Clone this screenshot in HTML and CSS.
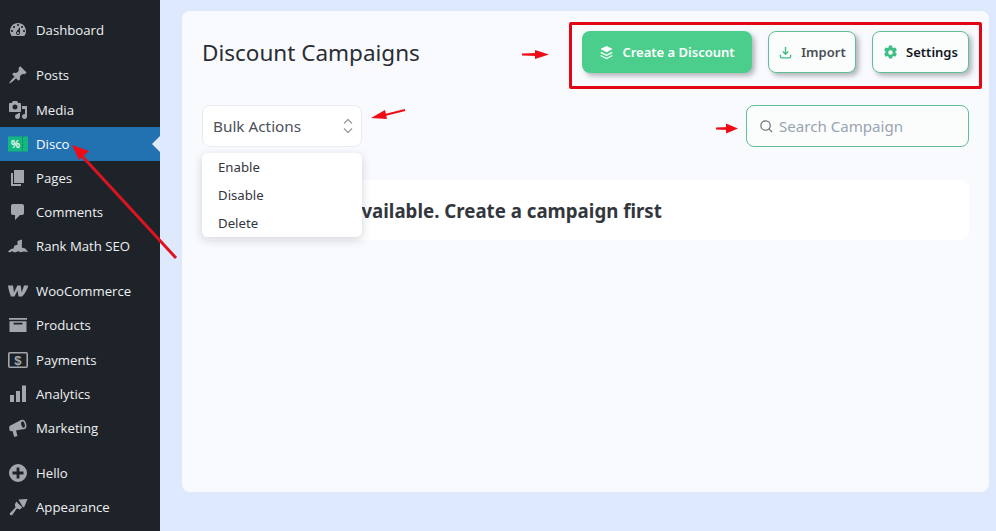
FILE: index.html
```html
<!DOCTYPE html>
<html lang="en">
<head>
<meta charset="utf-8">
<title>Discount Campaigns</title>
<link rel="stylesheet" href="styles.css">
</head>
<body>
<div class="app">
<nav class="side">
  <div class="group">
    <a class="item"><svg class="ic" viewBox="0 0 20 20"><path d="M3.76 16h12.48c1.1-1.37 1.76-3.11 1.76-5 0-4.42-3.58-8-8-8s-8 3.58-8 8c0 1.89.66 3.63 1.76 5zM10 4c.55 0 1 .45 1 1s-.45 1-1 1-1-.45-1-1 .45-1 1-1zM6 6c.55 0 1 .45 1 1s-.45 1-1 1-1-.45-1-1 .45-1 1-1zm8 0c.55 0 1 .45 1 1s-.45 1-1 1-1-.45-1-1 .45-1 1-1zm-5.37 5.55L12 7v6c0 1.1-.9 2-2 2s-2-.9-2-2c0-.57.24-1.08.63-1.45zM4 10c.55 0 1 .45 1 1s-.45 1-1 1-1-.45-1-1 .45-1 1-1zm12 0c.55 0 1 .45 1 1s-.45 1-1 1-1-.45-1-1 .45-1 1-1zm-5 3c0-.55-.45-1-1-1s-1 .45-1 1 .45 1 1 1 1-.45 1-1z"/></svg><span>Dashboard</span></a>
  </div>
  <div class="group">
    <a class="item"><svg class="ic" viewBox="0 0 20 20"><path d="M10.44 3.02l1.82-1.82 6.36 6.35-1.83 1.82c-1.05-.68-2.48-.57-3.41.36l-.75.75c-.92.93-1.04 2.35-.35 3.41l-1.83 1.82-2.41-2.41-2.8 2.79c-.42.42-3.38 2.71-3.8 2.29s1.86-3.39 2.28-3.81l2.79-2.79L4.1 9.36l1.83-1.82c1.05.69 2.48.57 3.4-.36l.75-.75c.93-.92 1.05-2.35.36-3.41z"/></svg><span>Posts</span></a>
    <a class="item"><svg class="ic" viewBox="0 0 20 20"><path d="M13 11V4c0-.55-.45-1-1-1h-1.67L9 1H5L3.67 3H2c-.55 0-1 .45-1 1v7c0 .55.45 1 1 1h10c.55 0 1-.45 1-1zM7 4.500c1.380 0 2.500 1.120 2.500 2.500S8.380 9.500 7 9.500 4.500 8.380 4.500 7 5.620 4.500 7 4.500zM14 6h5v10.500c0 1.380-1.120 2.500-2.500 2.500S14 17.880 14 16.500s1.120-2.500 2.500-2.500c.17 0 .34.020.5.050V9h-3V6zm-4 8.050V13h2v3.500c0 1.380-1.120 2.500-2.500 2.500S7 17.880 7 16.500 8.120 14 9.500 14c.17 0 .34.020.5.050z"/></svg><span>Media</span></a>
    <a class="item active"><svg class="ic" viewBox="0 0 20 20"><rect y="2.500" width="20" height="15" fill="#14b77f"/><path d="M14.500 2.500v15" stroke="#0b7f58" stroke-width="1" stroke-dasharray="1.500 1"/><text x="7.500" y="13.500" class="pct">%</text></svg><span>Disco</span></a>
    <a class="item"><svg class="ic" viewBox="0 0 20 20"><path d="M6 15V2h10v13H6zm-1 1h8v2H3V5h2v11z"/></svg><span>Pages</span></a>
    <a class="item"><svg class="ic" viewBox="0 0 20 20"><path d="M5 2h9c1.100 0 2 .9 2 2v7c0 1.100-.9 2-2 2h-2l-5 5v-5H5c-1.100 0-2-.9-2-2V4c0-1.100.9-2 2-2z"/></svg><span>Comments</span></a>
    <a class="item"><svg class="ic" viewBox="0 0 20 20"><path d="M0 15.500l3-2.500 2.500-.5 1-3 3-.8V5l4.500-1.500-.2 8 1.500.5 2 .5 2.700 3.500-4.500-.5-2.500.8-3-1-3 1.200-3-1.200-2.500 1.200z"/></svg><span>Rank Math SEO</span></a>
  </div>
  <div class="group">
    <a class="item"><svg class="ic" viewBox="0 0 20 20"><path d="M0 4.500h5l1 7 3.300-7h3.400l1 7 2.300-7h4.500C19 9 16.500 13 14 15.500h-3.500l-1-6-3 6H3C1.500 12 .5 8.500 0 4.500z"/></svg><span>WooCommerce</span></a>
    <a class="item"><svg class="ic" viewBox="0 0 20 20"><path fill-rule="evenodd" d="M1 3h18v1.800H1zM1.500 6.200h17V17h-17zM5.500 7.800v1.600h9V7.800z"/></svg><span>Products</span></a>
    <a class="item"><svg class="ic" viewBox="0 0 20 20"><rect x=".8" y="2.800" width="18.400" height="14.400" rx="1" class="outline"/><text x="10" y="14.500" class="dollar">$</text></svg><span>Payments</span></a>
    <a class="item"><svg class="ic" viewBox="0 0 20 20"><path d="M2 11h4v7H2zM8 7h4v11H8zM14 1.500h4V18h-4z"/></svg><span>Analytics</span></a>
    <a class="item"><svg class="ic" viewBox="0 0 20 20"><path d="M1.500 8L13 2l3 9-8 1.500 1.500 5.500-3.300 1-1.700-6-1.700.3C1.500 13 .8 10 1.500 8z"/><ellipse cx="15" cy="6.500" rx="3.200" ry="4.800" transform="rotate(-15 15 6.500)"/><ellipse cx="15" cy="6.500" rx="1.700" ry="3.200" transform="rotate(-15 15 6.500)" class="cut"/></svg><span>Marketing</span></a>
  </div>
  <div class="group">
    <a class="item"><svg class="ic" viewBox="0 0 20 20"><path fill-rule="evenodd" d="M10 1a9 9 0 1 0 0 18 9 9 0 0 0 0-18zM8.600 4.500h2.800v4.100h4.100v2.800h-4.100v4.100H8.600v-4.100H4.500V8.600h4.100z"/></svg><span>Hello</span></a>
    <a class="item"><svg class="ic" viewBox="0 0 20 20"><path d="M10.500 2.500l9-.5-3 7.500-1.500 1zM8.300 4.500l6 6-2.500 2-3-1-4.500 6.500c-1 1-3.200-.5-2.300-2l5.500-5.500-.7-3z"/></svg><span>Appearance</span></a>
  </div>
</nav>

<main class="main">
  <section class="card">
    <header class="head">
      <h1>Discount Campaigns</h1>
      <div class="actions">
        <button class="btn primary"><svg viewBox="0 0 16 16"><path d="M8 1l6.500 3.300L8 7.600 1.500 4.300z"/><path class="ln" d="M1.800 7.800L8 11l6.200-3.200M1.800 11.200L8 14.400l6.200-3.200"/></svg>Create a Discount</button>
        <button class="btn ghost import"><svg viewBox="0 0 16 16"><path class="gl" d="M8 2v7.500M5 6.800l3 3 3-3M2.500 10.500v1.500c0 1 .7 1.700 1.700 1.700h7.600c1 0 1.700-.7 1.700-1.700v-1.500"/></svg>Import</button>
        <button class="btn ghost settings"><svg viewBox="0 0 20 20"><path fill-rule="evenodd" d="M8 .8h4l.6 2.500 1.500.8 2.400-.8 2 3.400-1.800 1.800v1.800l1.800 1.800-2 3.400-2.400-.8-1.500.8-.6 2.500H8l-.6-2.500-1.500-.8-2.400.8-2-3.400 1.800-1.800V8.500L1.500 6.700l2-3.400 2.400.8 1.500-.8zM10 7a3 3 0 1 0 0 6 3 3 0 0 0 0-6z"/></svg>Settings</button>
      </div>
    </header>
    <div class="tools">
      <div class="select"><span>Bulk Actions</span><svg viewBox="0 0 12 20"><path d="M2 7.500l4-4 4 4M2 12.500l4 4 4-4"/></svg></div>
      <label class="search"><svg viewBox="0 0 16 16"><circle cx="7" cy="7" r="5"/><path d="M10.800 10.800L14 14"/></svg><input placeholder="Search Campaign" aria-label="Search Campaign"></label>
    </div>
    <div class="empty">No campaign available. Create a campaign first</div>
  </section>
</main>
</div>

<ul class="menu"><li>Enable</li><li>Disable</li><li>Delete</li></ul>
<div class="redbox"></div>
<svg class="marks" viewBox="0 0 996 531">
  <path d="M176 258L82 156" class="big"/><path d="M72 145l17 6-10 9z" class="head-red"/>
  <path d="M522 53.500l14-.5v3l-14-.5z" class="head-red"/><path d="M549 54.500l-14-4.500v9z" class="head-red"/>
  <path d="M405 110l-20 5" class="small"/><path d="M371 118l14-8 2 9z" class="head-red"/>
  <path d="M716 127.500l12-.5v3l-12-.5z" class="head-red"/><path d="M738 128.500l-12-5v10z" class="head-red"/>
</svg>
</body>
</html>
```

FILE: styles.css
```css
* { box-sizing: border-box; }
html, body { margin: 0; height: 100%; }
body { background: #dfe9fe; font-family: "Noto Sans", sans-serif; overflow: hidden; }
.app { display: flex; height: 531px; }

.side { width: 160px; flex: none; background: #1e2329; padding-top: 13.300px; display: flex; flex-direction: column; gap: 10.800px; font-family: "Open Sans", sans-serif; overflow: hidden; }
.item { display: flex; align-items: center; height: 34.200px; padding-left: 8px; gap: 8px; color: #eef0f2; font-size: 13.200px; position: relative; }
.ic { width: 20px; height: 20px; flex: none; fill: #a3a6aa; }
.item.active { background: #2271b1; color: #fff; }
.item.active::after { content: ""; position: absolute; right: 0; top: 50%; margin-top: -8px; border: 8px solid transparent; border-left-width: 0; border-right-color: #dfe9fe; }
.pct { font: 700 10px "Liberation Sans", sans-serif; fill: #fff; text-anchor: middle; }
.dollar { font: 700 13px "Liberation Mono", monospace; fill: #a3a6aa; text-anchor: middle; }
.outline { fill: none; stroke: #a3a6aa; stroke-width: 1.600; }
.cut { fill: #1e2329; }

.main { flex: 1; padding: 11px 7px 39px 22px; min-width: 0; }
.card { height: 481px; background: #f9fafe; border-radius: 8px; padding: 20px 20px 0; }
.head { display: flex; justify-content: space-between; align-items: center; height: 42px; }
h1 { margin: 0; font-size: 22.500px; font-weight: 400; color: #2a2d33; }
.actions { display: flex; gap: 16px; }
.btn { height: 42px; border-radius: 8px; display: flex; align-items: center; justify-content: center; gap: 8px; font: 600 13px "Noto Sans", sans-serif; box-shadow: 3px 3px 5px rgba(60,70,80,.38); }
.btn svg { width: 15px; height: 15px; flex: none; }
.primary { width: 170px; background: #4bce8c; border: 0; color: #fff; }
.primary svg { fill: #fff; }
.ln { fill: none; stroke: #fff; stroke-width: 1.400; }
.ghost { background: #fbfdfd; border: 1px solid #5fbf93; }
.import { width: 88px; color: #4a4e55; }
.settings { width: 97px; color: #14171c; }
.settings svg { fill: #3fbf86; }
.gl { fill: none; stroke: #3fbf86; stroke-width: 1.500; }

.tools { display: flex; justify-content: space-between; margin-top: 32px; }
.select { width: 160px; height: 42px; background: #fff; border: 1px solid #e8ebf0; border-radius: 8px; display: flex; align-items: center; justify-content: space-between; padding: 0 7px 0 10px; font-size: 15.300px; color: #4b5058; }
.select svg { width: 12px; height: 20px; fill: none; stroke: #9a9ea6; stroke-width: 1.300; }
.search { width: 223px; height: 42px; background: #fbfdfd; border: 1px solid #5fbf93; border-radius: 8px; display: flex; align-items: center; gap: 5px; padding-left: 12px; }
.search svg { width: 15px; height: 15px; flex: none; fill: none; stroke: #6b7078; stroke-width: 1.300; }
.search input { border: 0; background: none; outline: 0; width: 170px; padding: 0; font: 15.100px "Noto Sans", sans-serif; }
.search input::placeholder { color: #9aa3b2; opacity: 1; }
.empty { margin-top: 33px; height: 60px; background: #fff; border-radius: 8px; padding-left: 20px; display: flex; align-items: center; font-size: 18.700px; font-weight: 700; color: #33373d; }

.menu { position: absolute; left: 202px; top: 153px; width: 160px; height: 84px; margin: 0; padding: 0 0 0 16px; list-style: none; background: #fff; border-radius: 6px; box-shadow: 0 3px 10px rgba(60,70,90,.22); display: flex; flex-direction: column; justify-content: center; font-size: 13.200px; color: #33373d; }
.menu li { height: 28px; line-height: 28px; }
.redbox { position: absolute; left: 569px; top: 22px; width: 413px; height: 67px; border: 3px solid #e30613; border-radius: 2px; }
.marks { position: absolute; left: 0; top: 0; width: 996px; height: 531px; pointer-events: none; }
.big { stroke: #dc1420; stroke-width: 3; fill: none; }
.small { stroke: #ee0d16; stroke-width: 2; fill: none; }
.head-red { fill: #ee0d16; }
```
